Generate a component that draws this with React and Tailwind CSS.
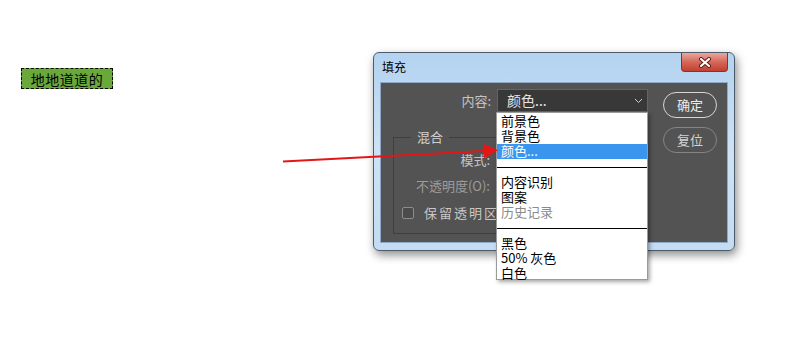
import React from 'react'

const font = { fontFamily: '"Noto Sans CJK SC", "Noto Sans", sans-serif' }

function MenuItem({ children, active, muted }) {
  return (
    <div
      className={`h-[15px] pl-[4px] text-[13px] leading-[14px] ${active ? 'bg-[#3a95ee] text-white' : muted ? 'text-[#8a8a8a]' : 'text-black'}`}
    >
      {children}
    </div>
  )
}

function Separator() {
  return (
    <div className="flex h-[16px] items-center">
      <div className="h-px w-full bg-black" />
    </div>
  )
}

export default function App() {
  return (
    <div className="relative h-[349px] w-[806px] overflow-hidden bg-white" style={font}>
      {/* selected text layer */}
      <div className="absolute left-[21px] top-[68px] flex h-[21px] w-[92px] items-center justify-center border border-dashed border-black bg-[#6aa83b] text-[14px] leading-none tracking-[0.5px] text-black">
        地地道道的
      </div>

      {/* dialog window */}
      <div className="absolute left-[373px] top-[52px] flex h-[199px] w-[362px] flex-col rounded-[6px] border border-[#4d5b6b] bg-gradient-to-b from-[#b3d3f0] via-[#cde2f5] to-[#c3dcf3] shadow-[2px_4px_10px_rgba(0,0,0,0.45)]">
        <div className="flex h-[29px] items-start justify-between">
          <span className="pl-[8px] pt-[5px] text-[12px] text-black">填充</span>
          <div className="mr-[6px] flex h-[19px] w-[47px] items-center justify-center rounded-b-[4px] border border-t-0 border-[#8d3127] bg-gradient-to-b from-[#e9a79f] via-[#d4675a] to-[#c2402f]">
            <svg width="14" height="11" viewBox="0 0 14 11" fill="none" strokeLinecap="round">
              <path d="M3 2l8 7M11 2l-8 7" stroke="#5a1a12" strokeWidth="4" />
              <path d="M3 2l8 7M11 2l-8 7" stroke="#ffffff" strokeWidth="2.2" />
            </svg>
          </div>
        </div>

        <div className="mx-[6px] mb-[7px] flex flex-1 border border-[#8fa9c4] bg-[#535353]">
          <div className="w-[282px] pl-[12px] pt-[6px]">
            <div className="flex h-[23px] items-center">
              <span className="w-[99px] pr-[1px] text-right text-[13px] text-[#c4c4c4]">内容:</span>
              <div className="ml-[5px] flex h-[23px] w-[151px] items-center justify-between border border-[#2b6fbf] bg-[#383838] pl-[9px] pr-[4px]">
                <span className="text-[14px] text-[#e4e4e4]">颜色...</span>
                <svg width="9" height="6" viewBox="0 0 9 6" fill="none" stroke="#cfcfcf" strokeWidth="1">
                  <path d="M1 1l3.5 3.5L8 1" />
                </svg>
              </div>
            </div>

            <fieldset className="mt-[17px] h-[105px] w-[250px] border border-[#3f3f3f]">
              <legend className="ml-[17px] px-[6px] text-[13px] leading-[16px] text-[#d2d2d2]">混合</legend>
              <div className="mt-[4px] flex h-[22px] items-center">
                <span className="w-[96px] text-right text-[13px] text-[#c4c4c4]">模式:</span>
              </div>
              <div className="mt-[4px] flex h-[22px] items-center">
                <span className="w-[96px] text-right text-[13px] text-[#9c9c9c]">不透明度(O):</span>
              </div>
              <div className="mt-[5px] flex h-[22px] items-center pl-[8px]">
                <div className="h-[12px] w-[12px] rounded-[2px] border border-[#8c8c8c] bg-[#4b4b4b]" />
                <span className="ml-[10px] text-[13px] tracking-[2px] text-[#c8c8c8]">保留透明区域</span>
              </div>
            </fieldset>
          </div>

          <div className="flex flex-col gap-[9px] pt-[9px]">
            <button className="flex h-[26px] w-[54px] items-center justify-center rounded-full border-[1.5px] border-[#d6d6d6] text-[13px] text-[#ececec]">
              确定
            </button>
            <button className="flex h-[26px] w-[54px] items-center justify-center rounded-full border border-[#858585] text-[13px] text-[#d4d4d4]">
              复位
            </button>
          </div>
        </div>
      </div>

      {/* open dropdown list */}
      <div className="absolute left-[496px] top-[112px] h-[168px] w-[152px] border border-[#9a9a9a] bg-white pt-[1px] shadow-[2px_2px_4px_rgba(0,0,0,0.35)]">
        <MenuItem>前景色</MenuItem>
        <MenuItem>背景色</MenuItem>
        <MenuItem active>颜色...</MenuItem>
        <Separator />
        <MenuItem>内容识别</MenuItem>
        <MenuItem>图案</MenuItem>
        <MenuItem muted>历史记录</MenuItem>
        <Separator />
        <MenuItem>黑色</MenuItem>
        <MenuItem>50% 灰色</MenuItem>
        <MenuItem>白色</MenuItem>
      </div>

      {/* annotation arrow */}
      <svg className="absolute left-0 top-0" width="806" height="349" viewBox="0 0 806 349">
        <line x1="283" y1="161.5" x2="484" y2="151" stroke="#e51616" strokeWidth="2" />
        <polygon points="498,150.3 483,143.5 484,158.5" fill="#e51616" />
      </svg>
    </div>
  )
}
